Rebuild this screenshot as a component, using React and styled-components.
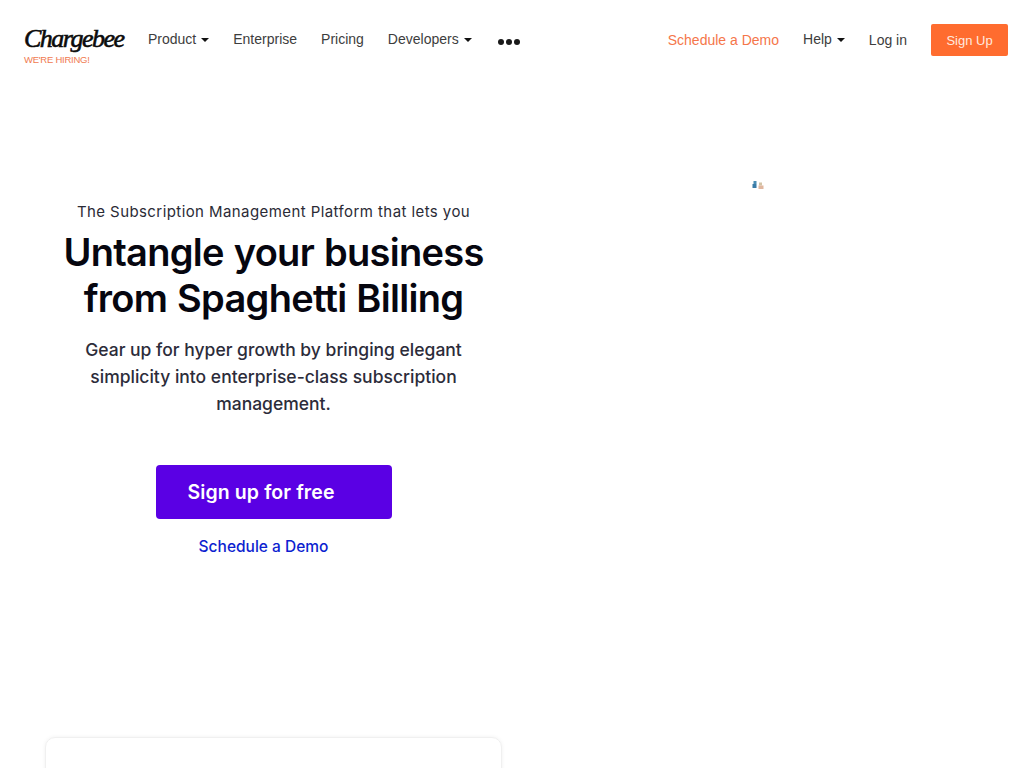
import styled, { createGlobalStyle } from "styled-components";

const GlobalStyle = createGlobalStyle`
  html, body {
    margin: 0;
    padding: 0;
    background: #fff;
    overflow: hidden;
    height: 768px;
    font-family: "Liberation Sans", Arial, sans-serif;
  }
`;

const Header = styled.header`
  display: flex;
  align-items: flex-start;
  justify-content: space-between;
  height: 80px;
  padding: 24px 24px 0;
  box-sizing: border-box;
`;

const NavGroup = styled.nav`
  display: flex;
  align-items: flex-start;
  gap: 24px;
`;

const LogoBox = styled.a`
  display: flex;
  flex-direction: column;
  width: 100px;
  height: 42px;
`;

const LogoWord = styled.span`
  font-family: "Liberation Serif", serif;
  font-style: italic;
  font-size: 26px;
  line-height: 29px;
  letter-spacing: -1.5px;
  color: #0b0b0b;
  -webkit-text-stroke: 0.6px #0b0b0b;
  white-space: nowrap;
`;

const Hiring = styled.span`
  font-size: 9.5px;
  line-height: 11px;
  margin-top: 1px;
  letter-spacing: -0.25px;
  color: #f07a50;
`;

const NavLink = styled.a`
  display: flex;
  align-items: center;
  gap: 5px;
  height: 30px;
  font-size: 14px;
  color: ${(p) => (p.$accent ? "#f5764a" : "#3d3d3d")};
  margin-top: ${(p) => (p.$low ? "1px" : "0")};
  white-space: nowrap;
`;

const Caret = styled.i`
  width: 0;
  height: 0;
  margin-top: 2px;
  border-left: 4.5px solid transparent;
  border-right: 4.5px solid transparent;
  border-top: 4.5px solid #111;
`;

const MoreDots = styled.span`
  display: flex;
  gap: 2px;
  margin: 15px 0 0 2px;
`;

const Dot = styled.i`
  width: 6px;
  height: 6px;
  border-radius: 50%;
  background: #1a1a1a;
`;

const SignUp = styled.a`
  display: flex;
  align-items: center;
  justify-content: center;
  width: 77px;
  height: 32px;
  border-radius: 2px;
  background: #ff6c2f;
  color: #ffe9df;
  font-size: 13px;
`;

const Main = styled.main`
  display: grid;
  grid-template-columns: 457px 1fr;
  padding: 0 0 0 45px;
`;

const HeroCopy = styled.section`
  display: flex;
  flex-direction: column;
  align-items: center;
  padding-top: 122px;
  text-align: center;
  font-family: Inter, "Noto Sans", sans-serif;
`;

const Eyebrow = styled.p`
  margin: 0;
  font-size: 15px;
  line-height: 20px;
  letter-spacing: 0.42px;
  color: #2b2b36;
`;

const Headline = styled.h1`
  margin: 7px 0 0;
  font-size: 38px;
  line-height: 46px;
  font-weight: 600;
  letter-spacing: -0.7px;
  word-spacing: 1px;
  color: #06060f;
`;

const Lead = styled.p`
  margin: 15px 0 0;
  width: 400px;
  font-size: 17.5px;
  line-height: 27px;
  font-weight: 500;
  color: #2c2c3a;
`;

const PrimaryButton = styled.a`
  display: flex;
  align-items: center;
  box-sizing: border-box;
  width: 236px;
  height: 54px;
  margin-top: 48px;
  padding-left: 32px;
  border-radius: 4px;
  background: #5a00e4;
  color: #fff;
  font-size: 19.5px;
  letter-spacing: 0.1px;
  font-weight: 600;
`;

const DemoLink = styled.a`
  margin: 18px 20px 0 0;
  font-size: 15.5px;
  line-height: 20px;
  font-weight: 500;
  color: #0d1fd0;
`;

const Card = styled.div`
  grid-column: 1;
  height: 120px;
  margin-top: 180px;
  border: 1px solid #f0f0f0;
  border-radius: 10px;
  box-shadow: 0 0 4px rgba(0, 0, 0, 0.06);
`;

const HeroArt = styled.div`
  grid-row: 1;
  grid-column: 2;
  padding: 100px 0 0 250px;
`;

const App = () => {
  return (
    <>
      <GlobalStyle />
      <Header>
        <NavGroup>
          <LogoBox>
            <LogoWord>Chargebee</LogoWord>
            <Hiring>WE'RE HIRING!</Hiring>
          </LogoBox>
          <NavLink>Product<Caret /></NavLink>
          <NavLink>Enterprise</NavLink>
          <NavLink>Pricing</NavLink>
          <NavLink>Developers<Caret /></NavLink>
          <MoreDots><Dot /><Dot /><Dot /></MoreDots>
        </NavGroup>
        <NavGroup>
          <NavLink $accent $low>Schedule a Demo</NavLink>
          <NavLink>Help<Caret /></NavLink>
          <NavLink $low>Log in</NavLink>
          <SignUp>Sign Up</SignUp>
        </NavGroup>
      </Header>
      <Main>
        <HeroCopy>
          <Eyebrow>The Subscription Management Platform that lets you</Eyebrow>
          <Headline>Untangle your business<br />from Spaghetti Billing</Headline>
          <Lead>Gear up for hyper growth by bringing elegant simplicity into enterprise-class subscription management.</Lead>
          <PrimaryButton>Sign up for free</PrimaryButton>
          <DemoLink>Schedule a Demo</DemoLink>
        </HeroCopy>
        <HeroArt>
          <svg width="12" height="10" viewBox="0 0 12 10" style={{ display: "block" }}>
            <rect x="1.5" y="1" width="3" height="3" fill="#4a8db5" />
            <rect x="0.5" y="4" width="4" height="4" fill="#3a7ca8" />
            <rect x="7" y="2.5" width="3" height="3" fill="#d3c4a6" />
            <rect x="6.5" y="5.5" width="5" height="3.5" fill="#e0b79f" />
          </svg>
        </HeroArt>
        <Card />
      </Main>
    </>
  );
};

export default App;
